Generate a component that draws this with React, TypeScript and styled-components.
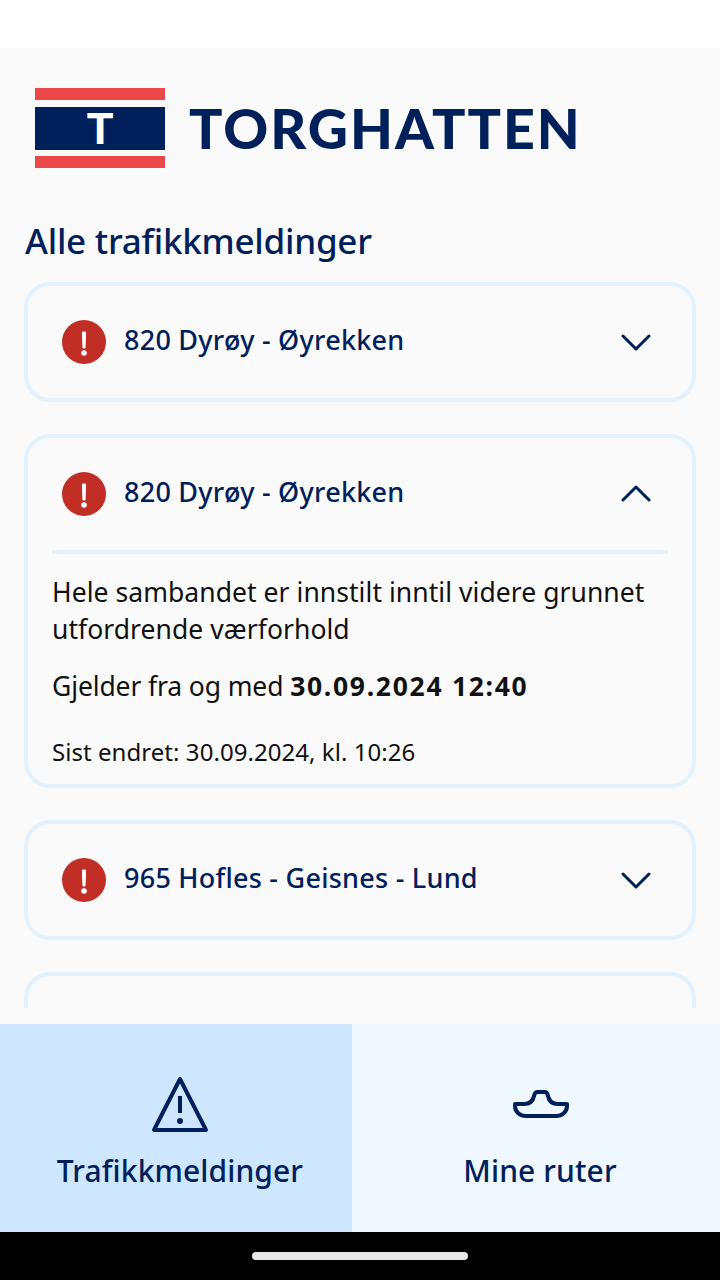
import React from "react";
import styled, { createGlobalStyle } from "styled-components";

const navy = "#00205b";
const line = "#e3f2fd";
const sans = `"Noto Sans", "Open Sans", sans-serif`;

const Global = createGlobalStyle`
  html, body { margin: 0; padding: 0; background: #fff; }
  * { box-sizing: border-box; }
`;

const Screen = styled.div`
  width: 720px;
  height: 1280px;
  display: flex;
  flex-direction: column;
  overflow: hidden;
  font-family: ${sans};
  background: #fff;
`;
const StatusBar = styled.div`
  height: 48px;
  flex: none;
  background: #fff;
`;
const Main = styled.main`
  flex: 1;
  min-height: 0;
  display: flex;
  flex-direction: column;
  background: #fafafa;
  padding: 40px 24px 16px;
`;
const Logo = styled.div`
  display: flex;
  align-items: center;
  gap: 24px;
  height: 80px;
  padding-left: 11px;
  flex: none;
`;
const Mark = styled.div`
  width: 130px;
  height: 80px;
  display: flex;
  flex-direction: column;
  justify-content: space-between;
`;
const Stripe = styled.div`
  height: 12px;
  background: #ec4748;
`;
const Band = styled.div`
  height: 43px;
  background: ${navy};
  color: #fff;
  display: flex;
  align-items: center;
  justify-content: center;
  font: 700 43px/43px Inter, sans-serif;
`;
const Wordmark = styled.div`
  color: ${navy};
  font: 900 55.5px/80px Lato, sans-serif;
  letter-spacing: 2px;
  white-space: nowrap;
`;
const Heading = styled.h1`
  margin: 49px 0 17px 1px;
  color: ${navy};
  font-size: 35px;
  line-height: 48px;
  font-weight: 500;
  letter-spacing: -0.25px;
  flex: none;
`;
const List = styled.div`
  flex: 1;
  min-height: 0;
  overflow: hidden;
  display: flex;
  flex-direction: column;
  gap: 32px;
`;
const Card = styled.section`
  flex: none;
  border: 4px solid ${line};
  border-radius: 26px;
`;
const Row = styled.div`
  height: 112px;
  display: flex;
  align-items: center;
  padding: 0 41px 0 34px;
  gap: 18px;
`;
const RowTitle = styled.div`
  flex: 1;
  padding-bottom: 6px;
  color: ${navy};
  font-size: 27px;
  font-weight: 500;
  letter-spacing: 0.25px;
  white-space: nowrap;
`;
const Body = styled.div`
  margin: 0 24px;
  padding-top: 20px;
  border-top: 4px solid ${line};
  color: #111;
`;
const Para = styled.p<{ $tight?: boolean }>`
  margin: 0 0 20px;
  font-size: 26.5px;
  line-height: 37px;
  letter-spacing: ${(p) => (p.$tight ? "-0.12px" : "0.05px")};
`;
const Strong = styled.b`
  font-weight: 700;
  letter-spacing: 1.7px;
`;
const Meta = styled.p`
  margin: 0;
  padding: 10px 0 16px;
  font-size: 24px;
  line-height: 33px;
  letter-spacing: 0.05px;
`;
const Tabs = styled.nav`
  height: 208px;
  flex: none;
  display: grid;
  grid-template-columns: 1fr 1fr;
  background: #f0f8ff;
`;
const Tab = styled.div<{ $active?: boolean }>`
  background: ${(p) =>
    p.$active ? "linear-gradient(#cfe6ff, #cfe6ff) left / 352px 100% no-repeat" : "none"};
  color: ${navy};
  display: flex;
  flex-direction: column;
  align-items: center;
  padding-top: 52px;
`;
const TabIcon = styled.svg`
  width: 64px;
  height: 60px;
  display: block;
  fill: none;
  stroke: ${navy};
`;
const TabLabel = styled.div`
  margin-top: 13px;
  font-size: 30px;
  line-height: 44px;
  font-weight: 500;
  letter-spacing: 0.1px;
`;
const GestureBar = styled.div`
  height: 48px;
  flex: none;
  background: #000;
  display: flex;
  align-items: center;
  justify-content: center;
`;
const Handle = styled.div`
  width: 216px;
  height: 8px;
  border-radius: 4px;
  background: #e8e8e8;
`;
const AlertSvg = styled.svg`
  width: 44px;
  height: 44px;
  flex: none;
`;
const ChevronSvg = styled.svg`
  width: 30px;
  height: 18px;
  flex: none;
  fill: none;
  stroke: ${navy};
  stroke-width: 3;
  stroke-linecap: round;
  stroke-linejoin: round;
`;

const Alert = () => (
  <AlertSvg viewBox="0 0 44 44">
    <circle cx="22" cy="22" r="22" fill="#c02e26" />
    <path d="M20.4 12h3.2l-.6 16h-2z" fill="#fff" stroke="#fff" strokeLinejoin="round" />
    <circle cx="22" cy="33" r="2.8" fill="#fff" />
  </AlertSvg>
);

const Chevron = ({ up }: { up?: boolean }) => (
  <ChevronSvg viewBox="0 0 30 18">
    <path d={up ? "M2 15 15 2l13 13" : "M2 3l13 13L28 3"} />
  </ChevronSvg>
);

export default function App() {
  return (
    <Screen>
      <Global />
      <StatusBar />
      <Main>
        <Logo>
          <Mark>
            <Stripe />
            <Band>T</Band>
            <Stripe />
          </Mark>
          <Wordmark>TORGHATTEN</Wordmark>
        </Logo>
        <Heading>Alle trafikkmeldinger</Heading>
        <List>
          <Card>
            <Row>
              <Alert />
              <RowTitle>820 Dyrøy - Øyrekken</RowTitle>
              <Chevron />
            </Row>
          </Card>
          <Card>
            <Row>
              <Alert />
              <RowTitle>820 Dyrøy - Øyrekken</RowTitle>
              <Chevron up />
            </Row>
            <Body>
              <Para>Hele sambandet er innstilt inntil videre grunnet utfordrende værforhold</Para>
              <Para $tight>
                Gjelder fra og med <Strong>30.09.2024 12:40</Strong>
              </Para>
              <Meta>Sist endret: 30.09.2024, kl. 10:26</Meta>
            </Body>
          </Card>
          <Card>
            <Row>
              <Alert />
              <RowTitle>965 Hofles - Geisnes - Lund</RowTitle>
              <Chevron />
            </Row>
          </Card>
          <Card>
            <Row />
          </Card>
        </List>
      </Main>
      <Tabs>
        <Tab $active>
          <TabIcon viewBox="0 0 64 60">
            <path d="M32 3 6 54h52z" strokeWidth="4" strokeLinejoin="round" />
            <path d="M32 20v17" strokeWidth="4" />
            <circle cx="32" cy="45" r="3" fill={navy} stroke="none" />
          </TabIcon>
          <TabLabel>Trafikkmeldinger</TabLabel>
        </Tab>
        <Tab>
          <TabIcon viewBox="0 0 64 60">
            <path
              d="M7 28h9c6 0 9-3 10-8 .6-3 1.500-4 3.500-4h7c2 0 3 1 3.500 4 1 5 4 8 10 8h9v2c0 6-5 10-11 10H18C12 40 7 36 7 30z"
              strokeWidth="4"
              strokeLinejoin="round"
            />
          </TabIcon>
          <TabLabel>Mine ruter</TabLabel>
        </Tab>
      </Tabs>
      <GestureBar>
        <Handle />
      </GestureBar>
    </Screen>
  );
}
